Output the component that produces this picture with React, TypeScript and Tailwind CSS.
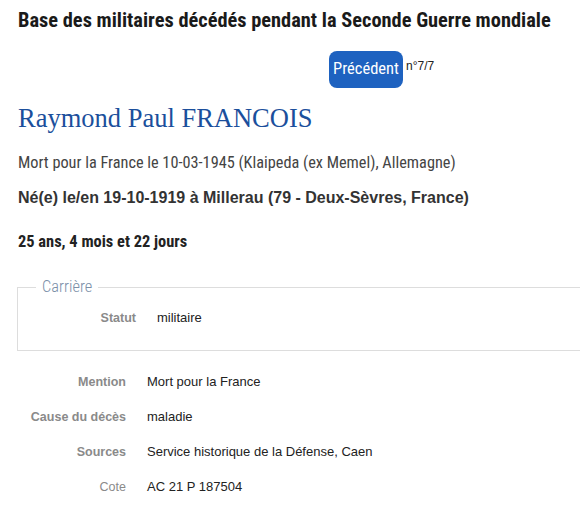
const cond = "font-['Roboto_Condensed','Roboto',sans-serif] font-stretch-condensed";

const rows = [
  { label: "Mention", value: "Mort pour la France", bold: true },
  { label: "Cause du décès", value: "maladie", bold: true },
  { label: "Sources", value: "Service historique de la Défense, Caen", bold: true },
  { label: "Cote", value: "AC 21 P 187504", bold: false },
];

function InfoRow({ label, value, bold }: { label: string; value: string; bold: boolean }) {
  return (
    <div className="flex items-baseline leading-[16px]">
      <span
        className={`w-[108px] shrink-0 text-right text-[12.5px] text-[#8a8a8a] ${bold ? "font-bold" : ""}`}
      >
        {label}
      </span>
      <span className="ml-[21px] text-[13px] text-[#222]">{value}</span>
    </div>
  );
}

export default function App() {
  return (
    <div className="w-[580px] h-[505px] overflow-hidden bg-white font-['Liberation_Sans',Arial,sans-serif] text-[#333]">
      <div className="pl-[18px] pt-[5px]">
        <h1 className={`${cond} text-[20.4px] leading-[30px] font-bold text-[#1a1a1a] whitespace-nowrap`}>
          Base des militaires décédés pendant la Seconde Guerre mondiale
        </h1>

        <div className="mt-[16px] flex items-start pl-[311px]">
          <button
            className={`${cond} h-[37px] w-[74px] rounded-[8px] bg-[#1e62c0] text-[16.5px] text-white`}
          >
            Précédent
          </button>
          <span className="ml-[3px] mt-[8px] text-[12px] leading-[14px] text-[#222]">n°7/7</span>
        </div>

        <h2 className="mt-[14px] font-['Liberation_Serif',serif] text-[26.5px] leading-[32px] text-[#1b4f9c]">
          Raymond Paul FRANCOIS
        </h2>

        <p className={`${cond} mt-[17px] text-[16.3px] leading-[24px] font-normal text-[#444] whitespace-nowrap`}>
          Mort pour la France le 10-03-1945 (Klaipeda (ex Memel), Allemagne)
        </p>

        <p className="mt-[13px] text-[16px] leading-[20px] font-bold text-[#333] whitespace-nowrap">
          Né(e) le/en 19-10-1919 à Millerau (79 - Deux-Sèvres, France)
        </p>

        <p className={`${cond} mt-[22px] text-[16.4px] leading-[24px] font-bold text-[#222]`}>
          25 ans, 4 mois et 22 jours
        </p>

        <fieldset className="mt-[22px] -ml-px -mr-[40px] border border-[#dddddd] pl-[10px] pt-[12px] pb-[24px]">
          <legend className={`${cond} ml-[8px] px-[6px] text-[16.4px] leading-[22px] font-light text-[#7b8fa8]`}>
            Carrière
          </legend>
          <div className="flex items-baseline leading-[16px]">
            <span className="w-[108px] shrink-0 text-right text-[12.5px] font-bold text-[#8a8a8a]">Statut</span>
            <span className="ml-[21px] text-[13px] text-[#222]">militaire</span>
          </div>
        </fieldset>

        <div className="mt-[23px] flex flex-col gap-[19px]">
          {rows.map((r) => (
            <InfoRow key={r.label} {...r} />
          ))}
        </div>
      </div>
    </div>
  );
}
